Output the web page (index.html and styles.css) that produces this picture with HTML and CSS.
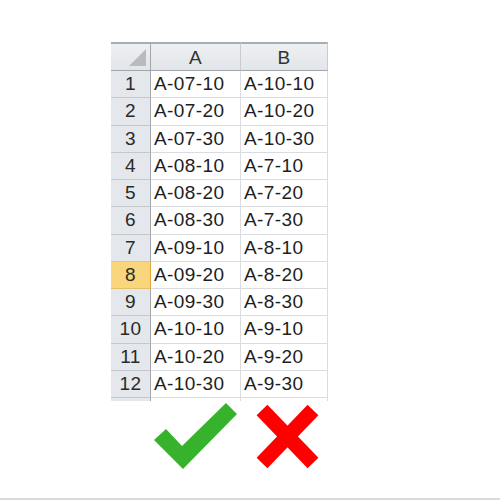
FILE: index.html
```html
<!DOCTYPE html>
<html>
<head>
<meta charset="utf-8">
<link rel="stylesheet" href="styles.css">
</head>
<body>
<div class="page">
  <div class="sheet">
    <div class="hd corner"><span class="tri"></span></div>
    <div class="hd">A</div>
    <div class="hd">B</div>

    <div class="rh">1</div><div class="c">A-07-10</div><div class="c">A-10-10</div>
    <div class="rh">2</div><div class="c">A-07-20</div><div class="c">A-10-20</div>
    <div class="rh">3</div><div class="c">A-07-30</div><div class="c">A-10-30</div>
    <div class="rh">4</div><div class="c">A-08-10</div><div class="c">A-7-10</div>
    <div class="rh">5</div><div class="c">A-08-20</div><div class="c">A-7-20</div>
    <div class="rh">6</div><div class="c">A-08-30</div><div class="c">A-7-30</div>
    <div class="rh">7</div><div class="c">A-09-10</div><div class="c">A-8-10</div>
    <div class="rh sel">8</div><div class="c">A-09-20</div><div class="c">A-8-20</div>
    <div class="rh">9</div><div class="c">A-09-30</div><div class="c">A-8-30</div>
    <div class="rh">10</div><div class="c">A-10-10</div><div class="c">A-9-10</div>
    <div class="rh">11</div><div class="c">A-10-20</div><div class="c">A-9-20</div>
    <div class="rh">12</div><div class="c">A-10-30</div><div class="c">A-9-30</div>

    <div class="rh stub"></div><div class="c stub"></div><div class="c stub"></div>
  </div>
  <svg class="marks" width="200" height="72" viewBox="145 399 200 72">
    <polygon fill="#36b22d" points="154,437 166,426 182,443 226,400 237,411 183,466"/>
    <line x1="262" y1="407" x2="313" y2="460" stroke="#ff0000" stroke-width="15"/>
    <line x1="313" y1="407" x2="262" y2="460" stroke="#ff0000" stroke-width="15"/>
  </svg>
</div>
</body>
</html>
```

FILE: styles.css
```css
html, body {
  margin: 0;
  padding: 0;
  background: #ffffff;
}
.page {
  width: 500px;
  height: 498px;
  border-bottom: 2px solid #dadada;
  padding: 42px 0 0 111px;
  box-sizing: content-box;
  display: flex;
  flex-direction: column;
  box-sizing: border-box;
  height: 500px;
}
.sheet {
  display: grid;
  grid-template-columns: 40px 90px 87px;
  grid-template-rows: 29px repeat(12, 27.25px) 3px;
  width: 217px;
  font-family: "Liberation Sans", Arial, sans-serif;
  font-size: 19px;
  letter-spacing: 0.4px;
  color: #1e1e1e;
}
.sheet > div {
  box-sizing: border-box;
  display: flex;
  align-items: center;
}
.hd {
  background: linear-gradient(#eef0f2, #e2e5e9);
  border-top: 2px solid #a9acb0;
  border-bottom: 1px solid #a2a5a9;
  border-right: 1px solid #c9cbcf;
  justify-content: center;
  color: #333;
  padding-top: 1px;
}
.corner {
  position: relative;
  border-right: 1px solid #a2a5a9;
}
.tri {
  position: absolute;
  right: 4px;
  bottom: 4px;
  width: 0;
  height: 0;
  border-left: 17px solid transparent;
  border-bottom: 17px solid #b9bcbf;
}
.rh {
  background: #e4e7eb;
  border-bottom: 1px solid #c4c7cb;
  border-right: 1px solid #a2a5a9;
  justify-content: center;
  color: #2a2a2a;
}
.rh.sel {
  background: #f9d67c;
  border-right: 1px solid #e3a53a;
  border-bottom: 1px solid #e3c06a;
}
.c {
  border-bottom: 1px solid #dadcdf;
  border-right: 1px solid #dadcdf;
  padding-left: 3px;
}
.stub.c {
  border-bottom: none;
}
.stub.rh {
  border-bottom: none;
}
.marks {
  display: block;
  margin-left: 34px;
  margin-top: 1px;
}
```
